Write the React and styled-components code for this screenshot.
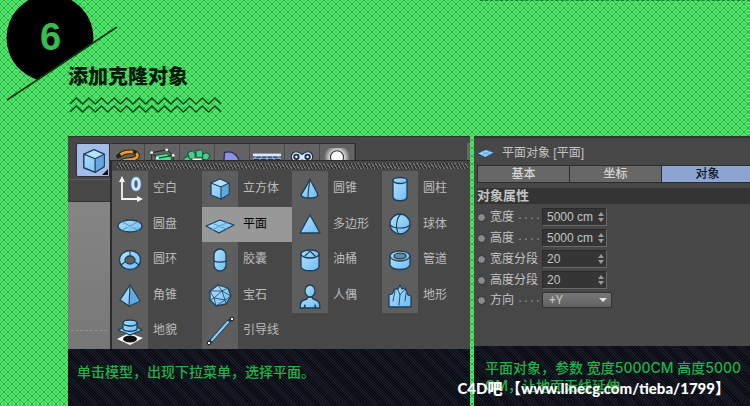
import React, { useState } from 'react'
import styled, { createGlobalStyle } from 'styled-components'

const OUT = '#1d3f57'

const shape = { fill: 'url(#blue)', stroke: OUT, strokeWidth: 1.3, strokeLinejoin: 'round', strokeLinecap: 'round' }
const line = { fill: 'none', stroke: OUT, strokeWidth: 1.1, strokeLinejoin: 'round', strokeLinecap: 'round' }

const icons = {
  cube: (
    <>
      <path {...shape} d="M15 5 L24 9 V20 L16 25 L6 21 V9 Z" />
      <path fill="#b5e2ff" d="M15 5.8 L23 9.4 L16 12.6 L7 9.6 Z" />
      <path fill="#5fa9e2" d="M16.4 13.2 L23.4 9.8 V19.7 L16.4 24 Z" />
      <path {...line} d="M6 9 L16 13 L24 9 M16 13 V25" />
    </>
  ),
  empty: (
    <>
      <path fill="none" stroke="#f4f4f4" strokeWidth="1.8" d="M7 6 V25 H24" />
      <path fill="#f4f4f4" d="M7 2 L10 8 H4 Z M28 25 L22 22 V28 Z" />
      <ellipse cx="21" cy="10" rx="3.3" ry="5.6" fill="none" stroke="#4977b8" strokeWidth="4.4" />
      <ellipse cx="21" cy="10" rx="3.3" ry="5.6" fill="none" stroke="#d0e5fe" strokeWidth="3" />
    </>
  ),
  disc: (
    <>
      <ellipse {...shape} cx="15" cy="17" rx="12" ry="6" />
      <path {...line} stroke="#5d9fcb" d="M7 13 L23 21 M23 13 L7 21" />
    </>
  ),
  plane: (
    <>
      <path {...shape} d="M1 17 L15 11 L29 16 L14 24 Z" />
      <path {...line} stroke="#5d9fcb" d="M8 14.4 L21.5 20 M22 13.8 L7.5 20.4" />
    </>
  ),
  ring: (
    <>
      <path {...shape} fillRule="evenodd" d="M15 5.5 A10.5 9.5 0 1 0 15 24.5 A10.5 9.5 0 1 0 15 5.5 Z M15 11 A5 4 0 1 1 15 19 A5 4 0 1 1 15 11 Z" />
      <path {...line} d="M15 6 V11 M6 20 L10 17 M20 17 L24 20" />
    </>
  ),
  pyramid: (
    <>
      <path {...shape} d="M15 4 L25 20 L14 25 L5 19 Z" />
      <path fill="#5fa9e2" d="M15 6 L24 20 L14.6 24 Z" />
      <path {...line} d="M15 4 L14 25" />
    </>
  ),
  relief: (
    <>
      <path fill="#fff" d="M2 23 L14 17 L28 22 L15 29 Z" />
      <ellipse cx="15" cy="23" rx="7" ry="3.5" fill="#111" />
      <path {...shape} d="M3 14 L10 11 H22 L27 14 L15 19 Z" />
      <path {...shape} d="M8 7 V13 C9 16 21 16 22 13 V7 Z" />
      <ellipse {...shape} cx="15" cy="7" rx="7" ry="3" />
    </>
  ),
  capsule: (
    <>
      <rect {...shape} x="9" y="4" width="12" height="22" rx="6" />
      <path {...line} d="M9 16 C12 17.5 18 17.5 21 16" />
    </>
  ),
  gem: (
    <>
      <path {...shape} d="M13 4 L23 7 L26 15 L21 23 L11 25 L5 19 L5 10 Z" />
      <path {...line} strokeWidth="0.8" d="M5 10 L17 10 L23 7 M13 4 L17 10 L26 15 L20 19 L17 10 L9 17 L20 19 L21 23 M5 10 L9 17 L5 19 M9 17 L11 25 L20 19" />
    </>
  ),
  guide: (
    <>
      <path d="M6 25 L24 5" stroke={OUT} strokeWidth="4" strokeLinecap="round" />
      <path d="M7 24 L23 6" stroke="#8ccbf7" strokeWidth="2.2" strokeLinecap="round" />
      <circle cx="4" cy="27" r="1.8" fill="#fff" stroke="#111" />
      <circle cx="27" cy="3" r="1.8" fill="#fff" stroke="#111" />
    </>
  ),
  cone: (
    <>
      <path {...shape} d="M15 5 C17 10 21 16 23 21 C21 25 8 25 6 21 C9 16 13 10 15 5 Z" />
      <path {...line} d="M15 5 C14 12 13 18 13 24" />
    </>
  ),
  polygon: <path {...shape} d="M15 6 L25 24 H5 Z" />,
  barrel: (
    <>
      <path {...shape} d="M6 9 V22 C8 27 22 27 24 22 V9 Z" />
      <ellipse {...shape} cx="15" cy="9" rx="9" ry="4" />
      <path {...line} d="M10 11 L15 6 L20 11" />
    </>
  ),
  figure: (
    <>
      <path {...shape} d="M5 27 C5 20 8 19 12 18 L13 16 H17 L18 18 C22 19 25 20 25 27 H21 L20 24 V27 H10 V24 L9 27 Z" />
      <ellipse {...shape} cx="15" cy="10" rx="5" ry="6" />
    </>
  ),
  cylinder: (
    <>
      <path {...shape} d="M8 6 V23 C9 28 21 28 22 23 V6 Z" />
      <ellipse {...shape} cx="15" cy="6.5" rx="7" ry="3" />
    </>
  ),
  sphere: (
    <>
      <circle {...shape} cx="15" cy="15" r="10" />
      <path {...line} d="M5 16 C9 20 21 20 25 16 M16 5 C11 9 10 20 14 25" />
    </>
  ),
  tube: (
    <>
      <path {...shape} d="M5 11 V20 C7 26 23 26 25 20 V11 Z" />
      <ellipse {...shape} cx="15" cy="11" rx="10" ry="5" />
      <ellipse cx="15" cy="11" rx="6" ry="2.8" fill="#71889a" stroke={OUT} strokeWidth="1.2" />
    </>
  ),
  terrain: (
    <>
      <path {...shape} d="M4 26 V14 L7 13 L10 8 L13 8 L15 4 L17 8 L20 7 L23 14 L26 15 V26 Z" />
      <path {...line} strokeWidth="0.9" d="M10 10 L8 20 M13 9 L15 14 L14 24 M20 8 L15 14 M21 12 L20 20" />
    </>
  ),
  spline: (
    <>
      <path fill="none" stroke="#2b2118" strokeWidth="5" d="M6 9 C12 2 28 3 26 9 C24 14 12 11 9 15 C7 18 12 21 18 20" />
      <path fill="none" stroke="#f49b28" strokeWidth="3" d="M6 9 C12 2 28 3 26 9 C24 14 12 11 9 15 C7 18 12 21 18 20" />
      <path fill="#222" d="M3 8 L7 5 L9 9 L5 12 Z M22 2 L26 4 L24 7 L21 5 Z" />
    </>
  ),
  nurbs: (
    <>
      <path fill="#4edb8f" stroke="#14502f" d="M8 8 L20 6 L25 10 V24 L14 26 L7 22 Z" />
      <path fill="none" stroke="#1b1b1b" d="M4 5 L20 2 L27 8 L10 11 Z M4 5 V20 M10 11 V24 M27 8 V22" />
      <circle cx="4" cy="5" r="1.5" fill="#fff" />
      <circle cx="20" cy="2" r="1.5" fill="#fff" />
      <circle cx="27" cy="8" r="1.5" fill="#fff" />
      <circle cx="10" cy="11" r="1.5" fill="#fff" />
    </>
  ),
  cloner: (
    <g stroke="#134a30" fill="#46cf86">
      <path d="M1 11 L5 9 L9 11 V17 H1 Z" />
      <path d="M5 5 L10 3 L13 6 V11 L7 12 Z" />
      <path d="M14 3 L19 2 L21 4 V10 H14 Z" />
      <path d="M21 7 L25 5 L29 8 L26 13 L21 12 Z" />
      <path fill="#f1f1f1" stroke="#999" d="M10 11 H20 V20 H10 Z" />
    </g>
  ),
  deformer: <path fill="#8c91e6" stroke="#262b63" strokeWidth="1.4" d="M7 5 C16 2 23 8 24 20 L18 26 L6 18 Z" />,
  floor: (
    <>
      <path fill="#24364d" d="M0 7 H30 V18 H0 Z" />
      <path fill="#dbeaff" d="M0 6 H30 V9 H0 Z" />
      <path fill="none" stroke="#a9c9ef" d="M0 11 H30 M0 14 H30 M10 8 L4 18 M15 8 V18 M20 8 L26 18 M5 8 L0 12 M25 8 L30 12" />
    </>
  ),
  camera: (
    <>
      <path fill="#dbe9ff" stroke="#1c2c45" strokeWidth="1.2" d="M9 4 C12 4 13 6 15 7 C17 6 18 4 21 4 A5 5 0 0 1 21 15 C18 15 17 13 15 13 C13 13 12 15 9 15 A5 5 0 0 1 9 4 Z" />
      <circle cx="9" cy="9.5" r="2.4" fill="#e8f2ff" stroke="#1c2c45" strokeWidth="2" />
      <circle cx="21" cy="9.5" r="2.4" fill="#e8f2ff" stroke="#1c2c45" strokeWidth="2" />
    </>
  ),
  light: (
    <>
      <circle cx="15" cy="10" r="14" fill="url(#glow)" />
      <circle cx="15" cy="10" r="7" fill="#fff" stroke="#333" strokeWidth="1.2" />
    </>
  ),
}

const Icon = ({ name, size = 30 }) => (
  <svg width={size} height={size} viewBox="0 0 30 30" aria-hidden="true">{icons[name]}</svg>
)

const tools = ['spline', 'nurbs', 'cloner', 'deformer', 'floor', 'camera', 'light']

const objects = [
  ['empty', '空白'], ['cube', '立方体'], ['cone', '圆锥'], ['cylinder', '圆柱'],
  ['disc', '圆盘'], ['plane', '平面'], ['polygon', '多边形'], ['sphere', '球体'],
  ['ring', '圆环'], ['capsule', '胶囊'], ['barrel', '油桶'], ['tube', '管道'],
  ['pyramid', '角锥'], ['gem', '宝石'], ['figure', '人偶'], ['terrain', '地形'],
  ['relief', '地貌'], ['guide', '引导线'],
]

const fields = [
  { id: 'width', label: '宽度', dots: true, value: '5000 cm' },
  { id: 'height', label: '高度', dots: true, value: '5000 cm' },
  { id: 'widthSeg', label: '宽度分段', value: '20' },
  { id: 'heightSeg', label: '高度分段', value: '20' },
]

const zigzag = (y) => {
  let d = `M2 ${y + 6}`
  for (let i = 1; i <= 24; i++) d += ` L${2 + i * 6.3} ${i % 2 ? y : y + 6}`
  return d
}

const App = () => {
  const [picked, setPicked] = useState('plane')
  const [tab, setTab] = useState('对象')

  return (
    <Page>
      <GlobalStyle />
      <Defs aria-hidden="true">
        <defs>
          <linearGradient id="blue" x1="0" y1="0" x2="1" y2="1">
            <stop offset="0" stopColor="#b4e2ff" />
            <stop offset="1" stopColor="#6cbbf3" />
          </linearGradient>
          <radialGradient id="glow">
            <stop offset="0.4" stopColor="#fff" />
            <stop offset="1" stopColor="#fff" stopOpacity="0" />
          </radialGradient>
        </defs>
      </Defs>

      <Header>
        <Badge>
          <svg width="120" height="106" viewBox="0 0 120 106" aria-hidden="true">
            <clipPath id="cut"><path d="M0 -10 H120 V25 L0 105 Z" /></clipPath>
            <circle cx="50" cy="38" r="43.5" clipPath="url(#cut)" />
            <path d="M7 100 L117 27" stroke="#08350f" strokeWidth="1.8" />
          </svg>
          <StepNumber>6</StepNumber>
        </Badge>
        <Edge />
        <Title>添加克隆对象</Title>
        <Waves width="156" height="18" viewBox="0 0 156 18" aria-hidden="true">
          <path d={zigzag(2)} />
          <path d={zigzag(10)} />
        </Waves>
      </Header>

      <Columns>
        <Panel>
          <Workspace>
            <Toolbar>
              <MainTool type="button" aria-label="立方体"><Icon name="cube" size={34} /></MainTool>
              <ToolGroup>
                {tools.map((t) => <Tool key={t} type="button" aria-label={t}><Icon name={t} size={28} /></Tool>)}
              </ToolGroup>
              <Grip />
            </Toolbar>
            <Strip />
            <Viewport />
            <Menu>
              <Hatch />
              <Items>
                {objects.map(([name, label]) => (
                  <Item key={name} type="button" $active={picked === name} onClick={() => setPicked(name)}>
                    <span><Icon name={name} /></span>
                    {label}
                  </Item>
                ))}
              </Items>
            </Menu>
          </Workspace>
          <Caption>单击模型，出现下拉菜单，选择平面。</Caption>
        </Panel>

        <Panel>
          <Attributes>
            <ObjectName><Icon name="plane" size={18} />平面对象 [平面]</ObjectName>
            <Tabs>
              {['基本', '坐标', '对象'].map((t) => (
                <Tab key={t} type="button" $active={tab === t} onClick={() => setTab(t)}>{t}</Tab>
              ))}
            </Tabs>
            <Section>对象属性</Section>
            <Fields>
              {fields.map((f) => (
                <Field key={f.id}>
                  <Dot />
                  <label htmlFor={f.id}>{f.label}{f.dots && <i>....</i>}</label>
                  <Spinner>
                    <input id={f.id} defaultValue={f.value} />
                    <svg width="6" height="10" viewBox="0 0 6 10" aria-hidden="true"><path d="M3 0 L6 4 H0 Z M3 10 L6 6 H0 Z" /></svg>
                  </Spinner>
                </Field>
              ))}
              <Field>
                <Dot />
                <label htmlFor="axis">方向<i>....</i></label>
                <Picker>
                  <select id="axis" defaultValue="+Y">
                    <option>+X</option>
                    <option>+Y</option>
                    <option>+Z</option>
                  </select>
                  <svg width="8" height="4" viewBox="0 0 8 4" aria-hidden="true"><path d="M0 0 H8 L4 4 Z" /></svg>
                </Picker>
              </Field>
            </Fields>
          </Attributes>
          <Caption $tight>平面对象，参数 宽度5000CM 高度5000<br />CM，让地面无线延伸</Caption>
        </Panel>
      </Columns>

      <Watermark>C4D吧 【www.linecg.com/tieba/1799】</Watermark>
    </Page>
  )
}

export default App

const weave = `url("data:image/svg+xml,%3Csvg xmlns='http://www.w3.org/2000/svg' width='8' height='8' shape-rendering='crispEdges'%3E%3Cpath fill='%2326ad45' d='M3 0h2v1h-2zM2 1h1v1h-1zM5 1h1v1h-1zM1 2h1v1h-1zM6 2h1v1h-1zM0 3h1v2h-1zM7 3h1v2h-1zM1 5h1v1h-1zM6 5h1v1h-1zM2 6h1v1h-1zM5 6h1v1h-1zM3 7h2v1h-2z'/%3E%3Cpath fill='%233ccb58' d='M3 3h2v2h-2zM0 0h1v1h-1zM7 0h1v1h-1zM0 7h1v1h-1zM7 7h1v1h-1z'/%3E%3C/svg%3E")`

const GlobalStyle = createGlobalStyle`
  * {
    box-sizing: border-box;
  }
  body {
    margin: 0;
    font-family: "Liberation Sans", "Noto Sans CJK SC", sans-serif;
    font-size: 12px;
  }
  button, input, select {
    font: inherit;
    color: inherit;
    border: 0;
    padding: 0;
    margin: 0;
    background: none;
    border-radius: 0;
  }
  svg {
    display: block;
    flex: none;
  }
`

const Page = styled.main`
  position: relative;
  display: flex;
  flex-direction: column;
  min-height: 100vh;
  overflow: hidden;
  background: #56e86d ${weave};
`

const Defs = styled.svg`
  position: absolute;
  width: 0;
  height: 0;
`

const Header = styled.header`
  position: relative;
  padding: 62px 0 22px 68px;
`

const Badge = styled.div`
  position: absolute;
  top: 0;
  left: 0;
`

const StepNumber = styled.span`
  position: absolute;
  top: 18px;
  left: 40px;
  color: #35bd50;
  font-size: 38px;
  line-height: 38px;
  font-weight: bold;
`

const Edge = styled.div`
  position: absolute;
  top: 0;
  right: 0;
  width: 36%;
  border-top: 1px dashed #1c7a34;
`

const Title = styled.h1`
  position: relative;
  margin: 0 0 6px;
  font-family: "Noto Sans CJK SC", sans-serif;
  font-size: 20px;
  line-height: 28px;
  font-weight: 900;
  color: #041a06;
`

const Waves = styled.svg`
  path {
    fill: none;
    stroke: #08451a;
    stroke-width: 1.4;
  }
`

const Columns = styled.div`
  flex: 1;
  display: grid;
  grid-template-columns: 402fr 276fr;
  gap: 4px;
  padding-left: 68px;
`

const Panel = styled.section`
  display: flex;
  flex-direction: column;
  min-width: 0;
`

const Workspace = styled.div`
  position: relative;
  display: flex;
  flex-direction: column;
  height: 213px;
  background: #474747;
  border-top: 1px solid #333;
`

const Toolbar = styled.div`
  display: flex;
  align-items: flex-start;
  padding: 6px 0 2px 8px;
`

const MainTool = styled.button`
  position: relative;
  display: grid;
  place-items: center;
  width: 34px;
  height: 34px;
  background: #a5bce6;
  border: 1px solid #2c3140;
  border-radius: 2px;

  &::after {
    content: '';
    position: absolute;
    right: 1px;
    bottom: 1px;
    border: 3px solid #111;
    border-top-color: transparent;
    border-left-color: transparent;
  }
`

const ToolGroup = styled.div`
  display: flex;
  border: 1px solid #2e2e2e;
  border-left: 0;
  border-radius: 2px;
`

const Tool = styled.button`
  display: grid;
  place-items: start center;
  padding-top: 4px;
  width: 35px;
  height: 32px;
  background: #636363;
  border-right: 1px solid #4a4a4a;
`

const Grip = styled.i`
  margin-left: auto;
  width: 3px;
  height: 18px;
  background: #666;
`

const Strip = styled.div`
  height: 23px;
  border-top: 1px solid #5c5c5c;
  border-bottom: 1px solid #333;
`

const Viewport = styled.div`
  flex: 1;
  background: linear-gradient(#858585, #777);

  &::after {
    content: '';
    display: block;
    width: 36px;
    margin: 128px 0 0 3px;
    border-top: 1px dashed #949494;
  }
`

const Menu = styled.div`
  position: absolute;
  inset: 23px 0 0 42px;
  display: flex;
  flex-direction: column;
  background: #474747;
  border: solid #2b2b2b;
  border-width: 1px 0 0 2px;
`

const Hatch = styled.div`
  height: 6px;
  margin: 2px 2px 2px 5px;
  background: repeating-linear-gradient(60deg, #2e2e2e 0 1px, #777 1px 2px, #444 2px 3px);
`

const Items = styled.div`
  flex: 1;
  display: grid;
  grid-template-columns: repeat(4, 90px);
  grid-template-rows: repeat(5, 1fr);
  overflow: hidden;
`

const Item = styled.button`
  display: flex;
  align-items: stretch;
  gap: 5px;
  min-height: 0;
  color: ${(p) => (p.$active ? '#000' : '#bcbcbc')};
  background: ${(p) => (p.$active ? '#989898' : 'none')};
  line-height: 34px;
  text-align: left;

  span {
    display: grid;
    place-items: center;
    width: 36px;
    background: ${(p) => (p.$active ? 'none' : '#5e5e5e')};
  }
`

const Attributes = styled.div`
  height: 210px;
  background: #474747;
  border-top: 2px solid #353535;
  color: #c4c4c4;
  padding-left: 3px;
`

const ObjectName = styled.div`
  display: flex;
  align-items: center;
  gap: 7px;
  height: 27px;
`

const Tabs = styled.div`
  display: flex;
  overflow: hidden;
  border-left: 1px solid #2c2c2c;
`

const Tab = styled.button`
  flex: 0 0 92px;
  height: 18px;
  line-height: 16px;
  font-weight: 500;
  border: solid #2c2c2c;
  border-width: 1px 1px 1px 0;
  color: ${(p) => (p.$active ? '#10141f' : '#d6d6d6')};
  background: ${(p) => (p.$active ? '#8ca5d3' : '#676767')};
`

const Section = styled.h2`
  margin: 5px 0 4px;
  font-size: 13px;
  line-height: 16px;
  font-weight: bold;
  background: #343434;
`

const Fields = styled.div`
  display: flex;
  flex-direction: column;
  gap: 3px;
`

const Field = styled.div`
  display: flex;
  align-items: center;

  label {
    display: flex;
    width: 52px;
    line-height: 16px;
    white-space: nowrap;
  }
  i {
    margin-left: 3px;
    font-style: normal;
    font-family: "Liberation Mono", monospace;
    font-size: 10px;
    color: #999;
  }
`

const Dot = styled.b`
  width: 9px;
  height: 9px;
  margin-right: 4px;
  border-radius: 50%;
  background: #8b8b8b;
  border: 1px solid #2f2f2f;
`

const Spinner = styled.div`
  display: flex;
  align-items: center;
  width: 65px;
  height: 18px;
  padding: 0 2px 0 4px;
  background: #353535;
  border: 1px solid #2a2a2a;
  border-bottom-color: #6a6a6a;
  border-right-color: #6a6a6a;

  input {
    flex: 1;
    min-width: 0;
    outline: 0;
    font-family: "Liberation Sans", sans-serif;
  }
  svg {
    fill: #9c9c9c;
  }
`

const Picker = styled.div`
  display: flex;
  align-items: center;
  width: 70px;
  height: 16px;
  padding: 0 4px 0 6px;
  background: linear-gradient(#777, #626262);
  border: 1px solid #303030;
  border-radius: 2px;

  select {
    flex: 1;
    min-width: 0;
    appearance: none;
    outline: 0;
    font-family: Roboto, sans-serif;
    line-height: 14px;
  }
  svg {
    fill: #e4e4e4;
  }
`

const Caption = styled.p`
  flex: 1;
  margin: 0;
  padding: ${(p) => (p.$tight ? '13px 0 6px 11px' : '14px 0 14px 9px')};
  background: #080a10 repeating-linear-gradient(45deg, #080a10 0 1px, #191d29 1px 2px);
  color: #23b145;
  font-family: Inter, "Noto Sans CJK SC", sans-serif;
  font-size: 14px;
  line-height: 18px;
  font-weight: 500;
  white-space: nowrap;
  overflow: hidden;
`

const Watermark = styled.div`
  position: absolute;
  right: 20px;
  bottom: 8px;
  color: #fff;
  font-family: Lato, "Noto Sans CJK SC", sans-serif;
  font-size: 15px;
  line-height: 20px;
  font-weight: 900;
  white-space: nowrap;
`
